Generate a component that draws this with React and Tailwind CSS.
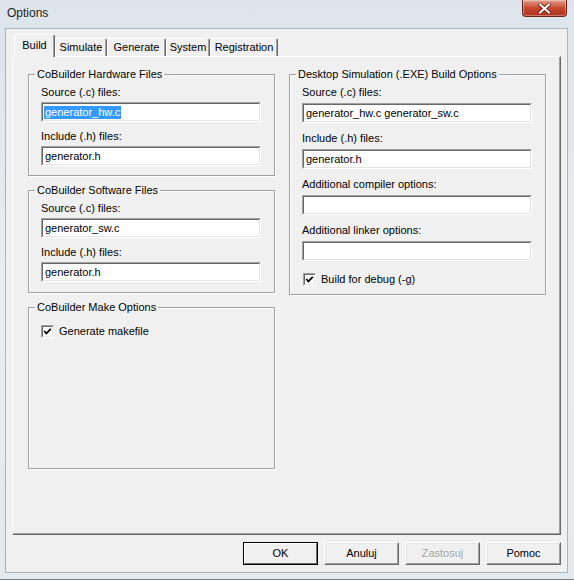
import React from 'react'

const TABS = [
  { label: 'Build', w: 'w-[41px]', active: true },
  { label: 'Simulate', w: 'w-[52px]' },
  { label: 'Generate', w: 'w-[59px]' },
  { label: 'System', w: 'w-[44px]' },
  { label: 'Registration', w: 'w-[68px]' },
]

function Field({ value, selected }) {
  return (
    <div className="h-[20px] border border-t-[#a0a0a0] border-l-[#a0a0a0] border-r-white border-b-white">
      <div className="h-full border border-t-[#696969] border-l-[#696969] border-r-[#e3e3e3] border-b-[#e3e3e3] bg-white flex items-center pl-px leading-[13px]">
        {value && (
          <span className={selected ? 'bg-[#3399ff] text-white px-px' : 'px-px'}>{value}</span>
        )}
      </div>
    </div>
  )
}

function Check({ label }) {
  return (
    <div className="flex items-center gap-[5px] leading-[13px]">
      <div className="w-[13px] h-[13px] border border-t-[#a0a0a0] border-l-[#a0a0a0] border-r-white border-b-white">
        <div className="w-full h-full border border-t-[#696969] border-l-[#696969] border-r-[#e3e3e3] border-b-[#e3e3e3] bg-white flex items-center justify-center">
          <svg width="9" height="9" viewBox="0 0 9 9">
            <polyline points="1.2,4 3.4,6.4 7.8,1.8" fill="none" stroke="#000" strokeWidth="1.7" />
          </svg>
        </div>
      </div>
      <span>{label}</span>
    </div>
  )
}

function Group({ title, className = '', children }) {
  return (
    <fieldset className={`border border-[#a0a0a0] shadow-[inset_1px_1px_0_#fff,1px_1px_0_#fff] ${className}`}>
      <legend className="-ml-[6px] px-[2px] leading-[13px]">{title}</legend>
      {children}
    </fieldset>
  )
}

function Label({ children, className = '' }) {
  return <div className={`leading-[13px] ${className}`}>{children}</div>
}

function Button({ children, primary, disabled }) {
  return (
    <button
      className={`w-[75px] h-[23px] bg-[#f0f0f0] border ${
        primary ? 'border-black' : 'border-t-white border-l-white border-r-[#696969] border-b-[#696969]'
      }`}
    >
      <div
        className={`w-full h-full flex items-center justify-center border ${
          primary
            ? 'border-t-white border-l-white border-r-[#696969] border-b-[#696969]'
            : 'border-t-[#e3e3e3] border-l-[#e3e3e3] border-r-[#a0a0a0] border-b-[#a0a0a0]'
        } ${disabled ? 'text-[#a0a0a0] [text-shadow:1px_1px_0_#fff]' : 'text-black'}`}
      >
        {children}
      </div>
    </button>
  )
}

export default function App() {
  return (
    <div className="w-[574px] h-[580px] flex flex-col bg-linear-to-b from-[#dde4eb] via-[#e9edf1] to-[#e4e9ee] border-b border-[#6f7b86] font-['Liberation_Sans',Arial,sans-serif] text-[11px] text-black overflow-hidden">
      {/* Title bar */}
      <div className="h-[28px] flex items-start shrink-0">
        <div className="pl-[7px] pt-[6px] text-[12px] leading-[15px] text-[#1e1e1e]">Options</div>
        <div className="ml-auto mr-[7px] w-[45px] h-[17px] rounded-b-[4px] border border-t-0 border-[#6b2317] bg-linear-to-b from-[#e3a08f] via-[#c7472f] to-[#b0321e] shadow-[inset_0_0_0_1px_rgba(255,255,255,0.35)] flex items-center justify-center">
          <svg width="13" height="11" viewBox="0 0 13 11">
            <path d="M2 1.5 L11 9.5 M11 1.5 L2 9.5" stroke="#5a1a10" strokeWidth="3.6" strokeLinecap="square" />
            <path d="M2 1.5 L11 9.5 M11 1.5 L2 9.5" stroke="#fff" strokeWidth="2" strokeLinecap="square" />
          </svg>
        </div>
      </div>

      {/* Client area */}
      <div className="ml-[5px] mr-[6px] mb-[6px] flex-1 flex flex-col bg-[#f0f0f0] border border-[#aab4be] px-[6px] pt-[6px]">
        {/* Tabs */}
        <div className="flex items-end h-[21px] ml-[2px]">
          {TABS.map(t => (
            <div
              key={t.label}
              className={`${t.w} flex items-center justify-center border-t border-l border-t-white border-l-white border-r border-r-[#696969] rounded-t-[2px] shadow-[inset_-1px_0_0_#a0a0a0] bg-[#f0f0f0] ${
                t.active ? 'h-[23px] -mb-[1px] relative z-10 pb-[2px]' : 'h-[18px]'
              }`}
            >
              {t.label}
            </div>
          ))}
        </div>

        {/* Panel */}
        <div className="h-[479px] border border-t-white border-l-white border-r-[#696969] border-b-[#696969] shadow-[inset_-1px_-1px_0_#a0a0a0] flex pl-[15px] pr-[14px] pt-[11px] gap-[14px]">
          {/* Left column */}
          <div className="w-[247px] flex flex-col">
            <Group title="CoBuilder Hardware Files" className="pl-[12px] pr-[13px] pt-[4px] pb-[9px]">
              <Label className="pt-px">Source (.c) files:</Label>
              <div className="mt-[3px]"><Field value="generator_hw.c" selected /></div>
              <Label className="mt-[8px]">Include (.h) files:</Label>
              <div className="mt-[3px]"><Field value="generator.h" /></div>
            </Group>
            <Group title="CoBuilder Software Files" className="mt-[8px] pl-[12px] pr-[13px] pt-[5px] pb-[10px]">
              <Label>Source (.c) files:</Label>
              <div className="mt-[3px]"><Field value="generator_sw.c" /></div>
              <Label className="mt-[8px]">Include (.h) files:</Label>
              <div className="mt-[3px]"><Field value="generator.h" /></div>
            </Group>
            <Group title="CoBuilder Make Options" className="mt-[8px] h-[168px] pl-[12px] pr-[13px] pt-[11px]">
              <Check label="Generate makefile" />
            </Group>
          </div>

          {/* Right column */}
          <div className="w-[257px] flex flex-col">
            <Group title="Desktop Simulation (.EXE) Build Options" className="h-[227px] pl-[12px] pr-[13px] pt-[5px]">
              <Label>Source (.c) files:</Label>
              <div className="mt-[4px]"><Field value="generator_hw.c generator_sw.c" /></div>
              <Label className="mt-[9px]">Include (.h) files:</Label>
              <div className="mt-[4px]"><Field value="generator.h" /></div>
              <Label className="mt-[9px]">Additional compiler options:</Label>
              <div className="mt-[4px]"><Field /></div>
              <Label className="mt-[9px]">Additional linker options:</Label>
              <div className="mt-[4px]"><Field /></div>
              <div className="mt-[12px] pl-px">
                <Check label="Build for debug (-g)" />
              </div>
            </Group>
          </div>
        </div>

        {/* Buttons */}
        <div className="flex justify-end gap-[6px] mt-[7px]">
          <Button primary>OK</Button>
          <Button>Anuluj</Button>
          <Button disabled>Zastosuj</Button>
          <Button>Pomoc</Button>
        </div>
      </div>
    </div>
  )
}
